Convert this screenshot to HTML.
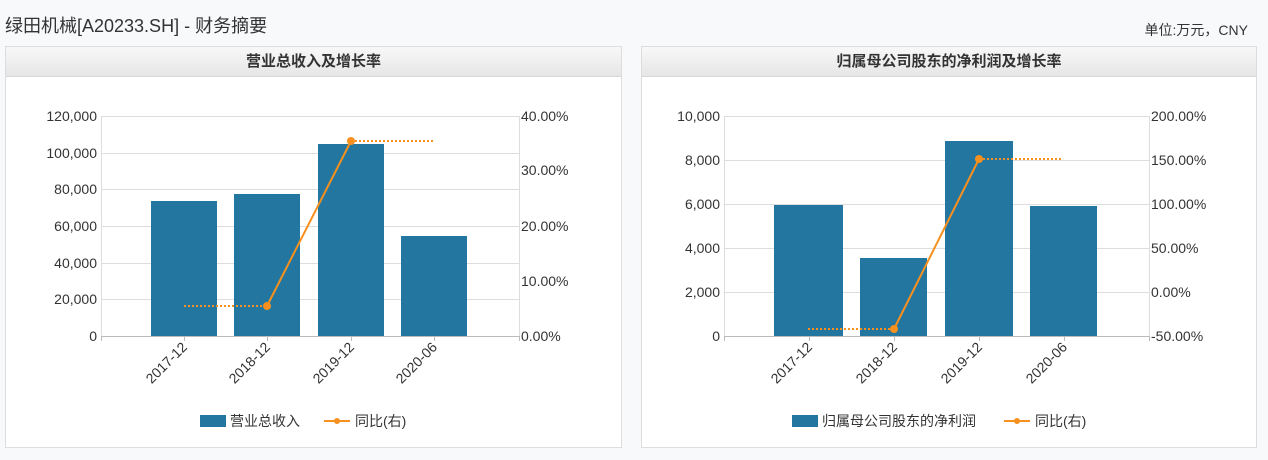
<!DOCTYPE html>
<html><head><meta charset="utf-8"><style>
body{margin:0;width:1268px;height:460px;background:#f7f9fb;font-family:"Liberation Sans","Noto Sans CJK SC",sans-serif;position:relative;overflow:hidden}
.t{position:absolute;left:5px;top:12px;font-size:18px;color:#333}
.u{position:absolute;right:20px;top:20px;font-size:14px;color:#333}
.p{position:absolute;top:46px;height:402px;background:#fff;border:1px solid #ddd;box-sizing:border-box}
.h{height:29px;background:linear-gradient(#f8f8f8,#e6e6e6);border-bottom:1px solid #d6d6d6;text-align:center;font-size:15px;font-weight:bold;line-height:29px;color:#333}
svg{position:absolute;left:0;top:0}
svg text{font-family:"Liberation Sans","Noto Sans CJK SC",sans-serif;font-size:14px;fill:#333}
</style></head><body>
<div class="t">绿田机械[A20233.SH] - 财务摘要</div>
<div class="u">单位:万元，CNY</div>
<div class="p" style="left:5px;width:617px"><div class="h">营业总收入及增长率</div></div>
<div class="p" style="left:641px;width:616px"><div class="h">归属母公司股东的净利润及增长率</div></div>
<svg width="1268" height="460">
<g stroke="#ddd" stroke-width="1">
<line x1="101" x2="519" y1="116.5" y2="116.5"/><line x1="101" x2="519" y1="153.5" y2="153.5"/><line x1="101" x2="519" y1="189.5" y2="189.5"/><line x1="101" x2="519" y1="226.5" y2="226.5"/><line x1="101" x2="519" y1="263.5" y2="263.5"/><line x1="101" x2="519" y1="299.5" y2="299.5"/>
<line x1="101.5" x2="101.5" y1="116" y2="336"/><line x1="519.5" x2="519.5" y1="116" y2="336"/>
<line x1="724" x2="1149" y1="116.5" y2="116.5"/><line x1="724" x2="1149" y1="160.5" y2="160.5"/><line x1="724" x2="1149" y1="204.5" y2="204.5"/><line x1="724" x2="1149" y1="248.5" y2="248.5"/><line x1="724" x2="1149" y1="292.5" y2="292.5"/>
<line x1="724.5" x2="724.5" y1="116" y2="336"/><line x1="1149.5" x2="1149.5" y1="116" y2="336"/>
</g>
<g fill="#23769f">
<rect x="151" y="201" width="66" height="135"/><rect x="234" y="194" width="66" height="142"/><rect x="318" y="144" width="66" height="192"/><rect x="401" y="236" width="66" height="100"/>
<rect x="774" y="205" width="69" height="131"/><rect x="860" y="258" width="67" height="78"/><rect x="945" y="141" width="68" height="195"/><rect x="1030" y="206" width="67" height="130"/>
</g>
<g stroke="#bbb"><line x1="101" x2="519" y1="336.5" y2="336.5"/><line x1="724" x2="1149" y1="336.5" y2="336.5"/>
<path d="M101.5 336v5M184.5 336v5M267.5 336v5M351.5 336v5M434.5 336v5M519.5 336v5M724.5 336v5M809.5 336v5M894.5 336v5M979.5 336v5M1064.5 336v5M1149.5 336v5"/></g>
<g stroke="#f7901e" stroke-width="2" fill="none">
<path d="M184 306H267M351 141H434M808 329H894M979 159H1063" stroke-dasharray="2 2"/>
<path d="M267 306L351 141M894 329L979 159"/>
</g>
<g fill="#f7901e"><circle cx="267" cy="306" r="4"/><circle cx="351" cy="141" r="4"/><circle cx="894" cy="329" r="4"/><circle cx="979" cy="159" r="4"/></g>
<g text-anchor="end">
<text x="97" y="121">120,000</text><text x="97" y="158">100,000</text><text x="97" y="194">80,000</text><text x="97" y="231">60,000</text><text x="97" y="268">40,000</text><text x="97" y="304">20,000</text><text x="97" y="341">0</text>
<text x="720" y="121">10,000</text><text x="720" y="165">8,000</text><text x="720" y="209">6,000</text><text x="720" y="253">4,000</text><text x="720" y="297">2,000</text><text x="720" y="341">0</text>
</g>
<g>
<text x="521" y="121">40.00%</text><text x="521" y="175">30.00%</text><text x="521" y="231">20.00%</text><text x="521" y="286">10.00%</text><text x="521" y="341">0.00%</text>
<text x="1151" y="121">200.00%</text><text x="1151" y="165">150.00%</text><text x="1151" y="209">100.00%</text><text x="1151" y="253">50.00%</text><text x="1151" y="297">0.00%</text><text x="1151" y="341">-50.00%</text>
</g>
<g text-anchor="end" style="font-size:12.5px">
<text transform="translate(188,348) rotate(-45)">2017-12</text><text transform="translate(271,348) rotate(-45)">2018-12</text><text transform="translate(355,348) rotate(-45)">2019-12</text><text transform="translate(438,348) rotate(-45)">2020-06</text>
<text transform="translate(813,348) rotate(-45)">2017-12</text><text transform="translate(898,348) rotate(-45)">2018-12</text><text transform="translate(983,348) rotate(-45)">2019-12</text><text transform="translate(1068,348) rotate(-45)">2020-06</text>
</g>
<rect x="200" y="415" width="26" height="12" fill="#23769f"/><text x="230" y="426">营业总收入</text>
<line x1="324" x2="350" y1="421" y2="421" stroke="#f7901e" stroke-width="2"/><circle cx="337" cy="421" r="3" fill="#f7901e"/><text x="355" y="426">同比(右)</text>
<rect x="792" y="415" width="26" height="12" fill="#23769f"/><text x="822" y="426">归属母公司股东的净利润</text>
<line x1="1004" x2="1030" y1="421" y2="421" stroke="#f7901e" stroke-width="2"/><circle cx="1017" cy="421" r="3" fill="#f7901e"/><text x="1035" y="426">同比(右)</text>
</svg>
</body></html>
